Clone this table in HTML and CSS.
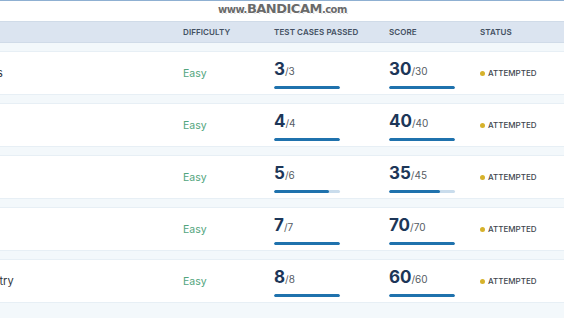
FILE: index.html
```html
<!DOCTYPE html>
<html lang="en">
<head>
<meta charset="utf-8">
<title>Submissions</title>
<link rel="stylesheet" href="styles.css">
</head>
<body>
<div class="topline"></div>
<div class="watermark"><span class="wm-small">www.</span><span class="wm-big">BANDICAM</span><span class="wm-small">.com</span></div>
<div class="viewport">
  <div class="table">
    <div class="thead">
      <div class="th"></div>
      <div class="th">Difficulty</div>
      <div class="th">Test Cases Passed</div>
      <div class="th">Score</div>
      <div class="th">Status</div>
    </div>
    <div class="tbody">
      <div class="row">
        <div class="name">Simple Array Sum Problems</div>
        <div class="diff">Easy</div>
        <div class="metric"><div class="val"><b>3</b>/3</div><div class="bar"><div class="fill" style="width:100%"></div></div></div>
        <div class="metric"><div class="val"><b>30</b>/30</div><div class="bar"><div class="fill" style="width:100%"></div></div></div>
        <div class="status"><span class="dot"></span>ATTEMPTED</div>
      </div>
      <div class="row">
        <div class="name"></div>
        <div class="diff">Easy</div>
        <div class="metric"><div class="val"><b>4</b>/4</div><div class="bar"><div class="fill" style="width:100%"></div></div></div>
        <div class="metric"><div class="val"><b>40</b>/40</div><div class="bar"><div class="fill" style="width:100%"></div></div></div>
        <div class="status"><span class="dot"></span>ATTEMPTED</div>
      </div>
      <div class="row">
        <div class="name"></div>
        <div class="diff">Easy</div>
        <div class="metric"><div class="val"><b>5</b>/6</div><div class="bar"><div class="fill" style="width:83.3%"></div></div></div>
        <div class="metric"><div class="val"><b>35</b>/45</div><div class="bar"><div class="fill" style="width:77.8%"></div></div></div>
        <div class="status"><span class="dot"></span>ATTEMPTED</div>
      </div>
      <div class="row">
        <div class="name"></div>
        <div class="diff">Easy</div>
        <div class="metric"><div class="val"><b>7</b>/7</div><div class="bar"><div class="fill" style="width:100%"></div></div></div>
        <div class="metric"><div class="val"><b>70</b>/70</div><div class="bar"><div class="fill" style="width:100%"></div></div></div>
        <div class="status"><span class="dot"></span>ATTEMPTED</div>
      </div>
      <div class="row">
        <div class="name">Grading Students per Country</div>
        <div class="diff">Easy</div>
        <div class="metric"><div class="val"><b>8</b>/8</div><div class="bar"><div class="fill" style="width:100%"></div></div></div>
        <div class="metric"><div class="val"><b>60</b>/60</div><div class="bar"><div class="fill" style="width:100%"></div></div></div>
        <div class="status"><span class="dot"></span>ATTEMPTED</div>
      </div>
    </div>
  </div>
</div>
</body>
</html>
```

FILE: styles.css
```css
* { box-sizing: border-box; }
html, body {
  margin: 0;
  padding: 0;
  background: #f3f8fb;
  font-family: Inter, "Noto Sans", sans-serif;
  color: #2b3440;
  overflow: hidden;
}
.topline {
  height: 1px;
  background: #8fb0d2;
}
.viewport {
  width: 564px;
  overflow: hidden;
  padding-top: 20px;
  background: linear-gradient(#ffffff 0, #ffffff 20px, transparent 20px);
}
.table {
  margin-left: -166px;
  width: 800px;
}
.thead, .row {
  display: grid;
  grid-template-columns: 349px 91px 115px 91px 1fr;
  align-items: center;
}
.thead {
  height: 22px;
  background: #dbe4f0;
  border-top: 1px solid #d0dbe8;
  border-bottom: 1px solid #d0dbe8;
}
.th {
  font-size: 8px;
  font-weight: 600;
  text-transform: uppercase;
  letter-spacing: 0.1px;
  color: #435062;
}
.tbody {
  display: flex;
  flex-direction: column;
  gap: 8px;
  padding-top: 8px;
}
.row {
  height: 44px;
  background: #ffffff;
  border-top: 1px solid #e7eff5;
  border-bottom: 1px solid #e7eff5;
}
.name {
  padding-left: 24px;
  font-size: 11px;
  color: #2f3540;
  white-space: nowrap;
}
.diff {
  font-size: 10.5px;
  color: #52a57d;
}
.metric {
  display: flex;
  flex-direction: column;
  padding-top: 1px;
}
.val {
  line-height: 20px;
  font-size: 10px;
  color: #555b63;
}
.val b {
  font-size: 17px;
  font-weight: 700;
  color: #1c3658;
}
.bar {
  width: 66px;
  height: 3px;
  margin-top: 5px;
  border-radius: 2px;
  background: #c9dcec;
  overflow: hidden;
}
.fill {
  height: 100%;
  background: #1f72ad;
  border-radius: 2px;
}
.status {
  display: flex;
  align-items: center;
  gap: 3px;
  font-size: 8px;
  font-weight: 500;
  color: #40464e;
}
.dot {
  width: 5px;
  height: 5px;
  border-radius: 50%;
  background: #d6b22b;
}
.watermark {
  position: absolute;
  top: 1px;
  left: 218px;
  font-family: "DejaVu Sans", sans-serif;
  font-weight: 700;
  color: #6a6a6a;
  text-shadow: 1px 0 0 #fff, -1px 0 0 #fff, 0 1px 0 #fff, 0 -1px 0 #fff, 1px 1px 0 #ccc;
  white-space: nowrap;
  line-height: 13px;
  letter-spacing: -0.5px;
}
.wm-small { font-size: 10px; }
.wm-big { font-size: 13px; }
```
